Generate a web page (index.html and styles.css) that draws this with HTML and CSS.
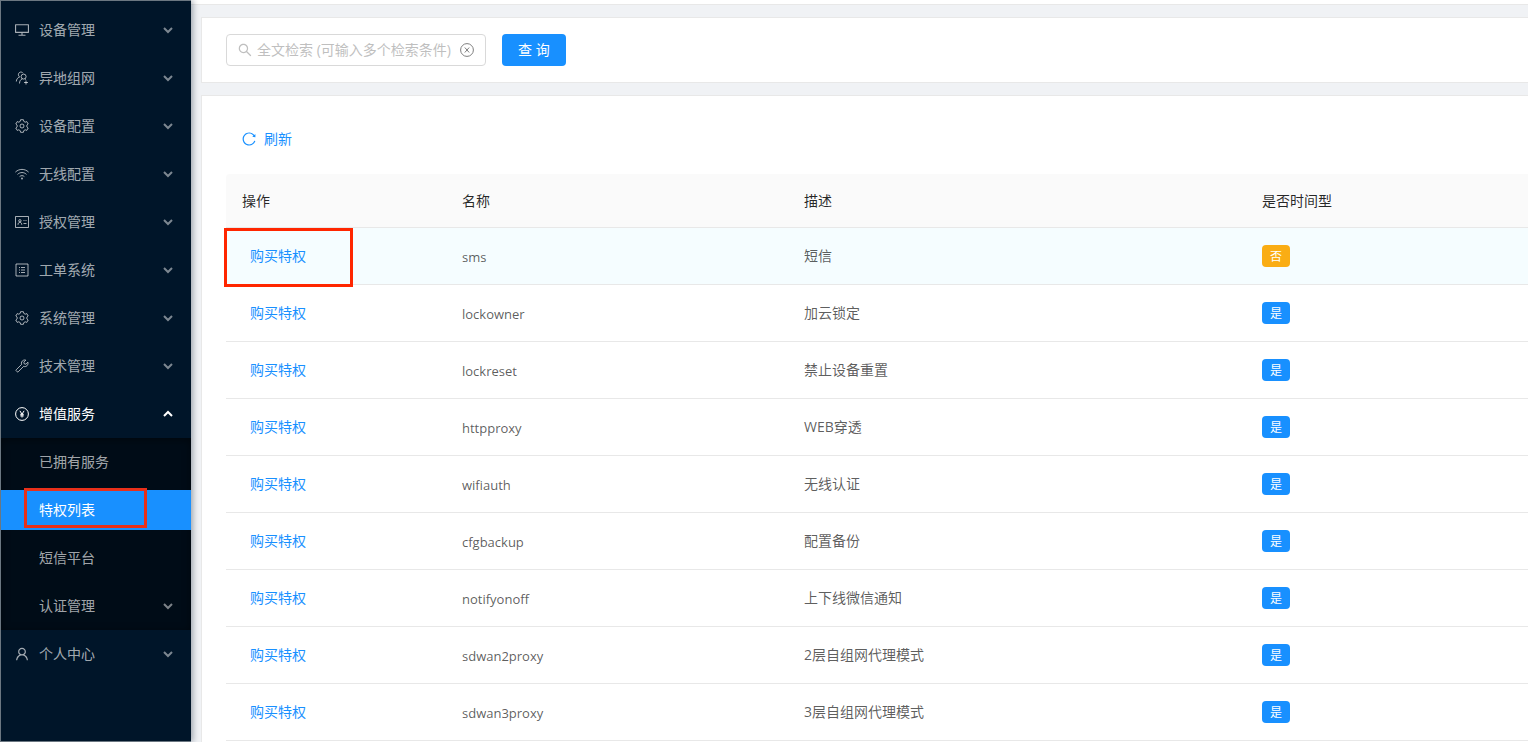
FILE: index.html
```html
<!DOCTYPE html>
<html lang="zh-CN">

<head>
  <meta charset="UTF-8">
  <meta name="viewport" content="width=device-width, initial-scale=1.0">
  <title>特权列表</title>
  <link rel="stylesheet" href="styles.css">
</head>

<body>
  <!-- icons -->
  <svg class="sprite" aria-hidden="true">
    <symbol id="i-desktop" viewBox="64 64 896 896">
      <path d="M928 140H96c-17.700 0-32 14.300-32 32v496c0 17.700 14.300 32 32 32h380v112H304c-8.800 0-16 7.200-16 16v48c0 4.400 3.600 8 8 8h432c4.400 0 8-3.600 8-8v-48c0-8.800-7.200-16-16-16H548V700h380c17.700 0 32-14.300 32-32V172c0-17.700-14.300-32-32-32zM888 628H136V212h752v416z" fill-rule="evenodd" />
    </symbol>
    <symbol id="i-team" viewBox="0 0 14 14">
      <g fill="none" stroke="currentColor">
        <circle cx="8.600" cy="5.600" r="2.500" />
        <path d="M4.500 12.500c0-2.500 1.200-4 2.900-4.700M9.800 7.800l1 .8M8 2.200C7.300 1.200 6.300.9 5.400 1.100 3.700 1.500 2.900 3.400 3.700 4.900c.2.500.5.800.9 1.100C2.500 6.700 1.500 8.200 1.300 10.500M11 9.500v4M9 11.500h4" />
      </g>
    </symbol>
    <symbol id="i-setting" viewBox="0 0 14 14">
      <g fill="none" stroke="currentColor" stroke-linejoin="round">
        <path d="M5.600.7h2.800l.4 1.700 1.400.8 1.600-.6 1.400 2.400-1.300 1.100v1.800l1.300 1.100-1.400 2.400-1.600-.6-1.400.8-.4 1.700H5.600l-.4-1.700-1.400-.8-1.600.6L.8 9l1.300-1.100V6.100L.8 5l1.400-2.400 1.600.6 1.400-.8z" />
        <circle cx="7" cy="7" r="2" />
      </g>
    </symbol>
    <symbol id="i-wifi" viewBox="0 0 14 14">
      <g fill="none" stroke="currentColor">
        <path d="M.4 5.100c3.800-3.600 9.400-3.600 13.200 0M2.500 7.400c2.600-2.500 6.400-2.500 9 0M4.600 9.600c1.400-1.300 3.400-1.300 4.800 0" />
      </g>
      <circle cx="7" cy="11.400" r="1" />
    </symbol>
    <symbol id="i-idcard" viewBox="0 0 14 14">
      <g fill="none" stroke="currentColor">
        <path d="M.5 1.500h13v11H.5z" />
        <circle cx="4.900" cy="5.800" r="1.200" />
        <path d="M3 9.800c.1-1.700.8-2.500 1.900-2.500s1.800.8 1.900 2.500M8.500 5.500h1M8.500 8.500h3M10.500 5.500h1" />
      </g>
    </symbol>
    <symbol id="i-order" viewBox="0 0 14 14">
      <g fill="none" stroke="currentColor">
        <path d="M1 1h12v12H1z" />
        <path d="M4 4.500h1M6 4.500h4M4 7h1M6 7h4M4 9.500h1M6 9.500h4" />
      </g>
    </symbol>
    <symbol id="i-tool" viewBox="0 0 14 14">
      <path d="M10.800 1.100C9.300.7 7.500 1.200 6.700 2.900c-.4.900-.4 1.700-.1 2.500L1.200 10.800c-.3.300-.3.700 0 1l1 1c.3.300.7.300 1 0l5.400-5.400c2.600.9 5-1.300 4.300-4.200l-2 2-1.700-.4-.4-1.700z" fill="none" stroke="currentColor" stroke-linejoin="round" />
    </symbol>
    <symbol id="i-yen" viewBox="0 0 14 14">
      <g fill="none" stroke="currentColor">
        <circle cx="7" cy="7" r="6.400" />
        <path d="M4.900 3.800L7 7.200l2.100-3.400M7 7v3.500M5.200 7.300h3.600M5.200 8.900h3.600" />
      </g>
    </symbol>
    <symbol id="i-user" viewBox="64 64 896 896">
      <path d="M858.500 763.600a374 374 0 00-80.600-119.500 375.630 375.630 0 00-119.500-80.600c-.4-.2-.8-.3-1.200-.5C719.500 518 760 444.700 760 362c0-137-111-248-248-248S264 225 264 362c0 82.700 40.500 156 102.800 201.100-.4.200-.8.300-1.200.5-44.800 18.900-85 46-119.500 80.600a375.630 375.630 0 00-80.600 119.500A371.700 371.700 0 00136 901.800a8 8 0 008 8.200h60c4.400 0 7.900-3.500 8-7.800 2-77.200 33-149.500 87.800-204.300 56.700-56.700 132-87.900 212.200-87.900s155.500 31.200 212.200 87.900C779 752.700 810 825 812 902.200c.1 4.400 3.600 7.800 8 7.800h60a8 8 0 008-8.200c-1-47.800-10.900-94.300-29.500-138.200zM512 534c-45.900 0-89.100-17.900-121.600-50.400S340 407.900 340 362c0-45.900 17.900-89.100 50.400-121.600S466.100 190 512 190s89.100 17.900 121.600 50.400S684 316.100 684 362c0 45.900-17.900 89.100-50.400 121.600S557.900 534 512 534z" />
    </symbol>
    <symbol id="i-down" viewBox="0 0 10 10">
      <path d="M1 3l4 4 4-4" fill="none" stroke="currentColor" stroke-width="2" />
    </symbol>
    <symbol id="i-search" viewBox="64 64 896 896">
      <path d="M909.600 854.500L649.900 594.800C690.200 542.700 712 479 712 412c0-80.200-31.300-155.400-87.900-212.100-56.600-56.700-132-87.900-212.100-87.900s-155.500 31.300-212.100 87.900C143.200 256.500 112 331.800 112 412c0 80.100 31.300 155.500 87.900 212.100C256.500 680.800 331.800 712 412 712c67 0 130.600-21.800 182.700-62l259.700 259.600a8.200 8.200 0 0011.600 0l43.600-43.500a8.200 8.200 0 000-11.600zM570.400 570.400C528 612.700 471.800 636 412 636s-116-23.300-158.400-65.600C211.300 528 188 471.800 188 412s23.300-116.100 65.600-158.400C296 211.300 352.200 188 412 188s116.100 23.200 158.400 65.600S636 352.200 636 412s-23.300 116.100-65.600 158.400z" />
    </symbol>
    <symbol id="i-close" viewBox="0 0 14 14">
      <g fill="none" stroke="currentColor">
        <circle cx="7" cy="7" r="6.400" />
        <path d="M4.800 4.500l4.400 5M9.200 4.500l-4.400 5" />
      </g>
    </symbol>
    <symbol id="i-reload" viewBox="64 64 896 896">
      <path d="M909.100 209.300l-56.400 44.100C775.800 155.100 656.200 92 521.900 92 290 92 102.300 279.500 102 511.500 101.700 743.700 289.800 932 521.900 932c181.300 0 335.800-115 394.600-276.100 1.500-4.200-.7-8.900-4.900-10.300l-56.700-19.500a8 8 0 00-10.100 4.800c-1.800 5-3.800 10-5.900 14.900-17.300 41-42.100 77.800-73.700 109.400A344.770 344.770 0 01655.900 829c-42.300 17.900-87.400 27-133.800 27-46.500 0-91.500-9.100-133.800-27A341.500 341.500 0 01279 755.200a342.160 342.160 0 01-73.700-109.400c-17.900-42.400-27-87.400-27-133.900s9.100-91.500 27-133.900c17.300-41 42.100-77.800 73.700-109.400 31.600-31.600 68.400-56.400 109.300-73.800 42.300-17.900 87.400-27 133.800-27 46.500 0 91.500 9.100 133.800 27a341.500 341.500 0 01109.300 73.800c9.900 9.900 19.200 20.400 27.800 31.400l-60.200 47a8 8 0 003 14.100l175.600 43c5 1.200 9.900-2.600 9.900-7.700l.8-180.900c-.1-6.600-7.800-10.300-13-6.200z" />
    </symbol>
  </svg>

  <div class="layout">
    <nav class="sider">
      <button class="menu-item" type="button"><svg class="icon"><use href="#i-desktop" /></svg><span>设备管理</span><svg class="arrow"><use href="#i-down" /></svg></button>
      <button class="menu-item" type="button"><svg class="icon"><use href="#i-team" /></svg><span>异地组网</span><svg class="arrow"><use href="#i-down" /></svg></button>
      <button class="menu-item" type="button"><svg class="icon"><use href="#i-setting" /></svg><span>设备配置</span><svg class="arrow"><use href="#i-down" /></svg></button>
      <button class="menu-item" type="button"><svg class="icon"><use href="#i-wifi" /></svg><span>无线配置</span><svg class="arrow"><use href="#i-down" /></svg></button>
      <button class="menu-item" type="button"><svg class="icon"><use href="#i-idcard" /></svg><span>授权管理</span><svg class="arrow"><use href="#i-down" /></svg></button>
      <button class="menu-item" type="button"><svg class="icon"><use href="#i-order" /></svg><span>工单系统</span><svg class="arrow"><use href="#i-down" /></svg></button>
      <button class="menu-item" type="button"><svg class="icon"><use href="#i-setting" /></svg><span>系统管理</span><svg class="arrow"><use href="#i-down" /></svg></button>
      <button class="menu-item" type="button"><svg class="icon"><use href="#i-tool" /></svg><span>技术管理</span><svg class="arrow"><use href="#i-down" /></svg></button>
      <button class="menu-item open" type="button"><svg class="icon"><use href="#i-yen" /></svg><span>增值服务</span><svg class="arrow"><use href="#i-down" /></svg></button>
      <div class="submenu">
        <a class="menu-item" href="#">已拥有服务</a>
        <a class="menu-item selected" href="#">特权列表</a>
        <a class="menu-item" href="#">短信平台</a>
        <button class="menu-item" type="button"><span>认证管理</span><svg class="arrow"><use href="#i-down" /></svg></button>
      </div>
      <button class="menu-item" type="button"><svg class="icon"><use href="#i-user" /></svg><span>个人中心</span><svg class="arrow"><use href="#i-down" /></svg></button>
    </nav>

    <div class="main">
      <header class="header"></header>
      <main class="content">
        <form class="card search">
          <div class="search-box">
            <svg class="icon"><use href="#i-search" /></svg>
            <input type="text" placeholder="全文检索 (可输入多个检索条件)" aria-label="全文检索">
            <button class="clear" type="button" aria-label="清空"><svg class="icon"><use href="#i-close" /></svg></button>
          </div>
          <button class="btn-primary" type="button">查 询</button>
        </form>

        <section class="card list">
          <button class="refresh" type="button"><svg class="icon"><use href="#i-reload" /></svg>刷新</button>
          <table class="table">
            <colgroup>
              <col class="col-action">
              <col class="col-name">
              <col class="col-desc">
              <col>
            </colgroup>
            <thead>
              <tr>
                <th>操作</th>
                <th>名称</th>
                <th>描述</th>
                <th>是否时间型</th>
              </tr>
            </thead>
            <tbody>
              <tr class="hover">
                <td class="marked"><a href="#">购买特权</a></td>
                <td class="name">sms</td>
                <td>短信</td>
                <td><span class="tag no">否</span></td>
              </tr>
              <tr>
                <td><a href="#">购买特权</a></td>
                <td class="name">lockowner</td>
                <td>加云锁定</td>
                <td><span class="tag">是</span></td>
              </tr>
              <tr>
                <td><a href="#">购买特权</a></td>
                <td class="name">lockreset</td>
                <td>禁止设备重置</td>
                <td><span class="tag">是</span></td>
              </tr>
              <tr>
                <td><a href="#">购买特权</a></td>
                <td class="name">httpproxy</td>
                <td>WEB穿透</td>
                <td><span class="tag">是</span></td>
              </tr>
              <tr>
                <td><a href="#">购买特权</a></td>
                <td class="name">wifiauth</td>
                <td>无线认证</td>
                <td><span class="tag">是</span></td>
              </tr>
              <tr>
                <td><a href="#">购买特权</a></td>
                <td class="name">cfgbackup</td>
                <td>配置备份</td>
                <td><span class="tag">是</span></td>
              </tr>
              <tr>
                <td><a href="#">购买特权</a></td>
                <td class="name">notifyonoff</td>
                <td>上下线微信通知</td>
                <td><span class="tag">是</span></td>
              </tr>
              <tr>
                <td><a href="#">购买特权</a></td>
                <td class="name">sdwan2proxy</td>
                <td>2层自组网代理模式</td>
                <td><span class="tag">是</span></td>
              </tr>
              <tr>
                <td><a href="#">购买特权</a></td>
                <td class="name">sdwan3proxy</td>
                <td>3层自组网代理模式</td>
                <td><span class="tag">是</span></td>
              </tr>
            </tbody>
          </table>
        </section>
      </main>
    </div>
  </div>
</body>

</html>
```
FILE: styles.css
```css
*,
*::after {
  box-sizing: border-box;
}

body {
  margin: 0;
  font-family: "Open Sans", "Noto Sans CJK SC", sans-serif;
  font-size: 14px;
  line-height: 22px;
  color: rgba(0, 0, 0, 0.65);
  background: #f0f2f5;
}

button,
input {
  font: inherit;
}

button {
  border: 0;
  background: none;
  cursor: pointer;
}

a {
  color: #1890ff;
  text-decoration: none;
}

.sprite {
  display: none;
}

.icon {
  width: 14px;
  height: 14px;
  flex: none;
  fill: currentColor;
}

.layout {
  display: flex;
  min-height: 100vh;
}

/* sider */
.sider {
  flex: none;
  width: 191px;
  padding-top: 5px;
  background: #001529;
  border: 1px solid #6b7781;
  border-right: 0;
  box-shadow: 2px 0 6px rgba(0, 21, 41, 0.35);
  z-index: 1;
}

.menu-item {
  position: relative;
  display: flex;
  align-items: center;
  gap: 10px;
  width: 100%;
  height: 40px;
  margin: 4px 0 8px;
  padding: 0 18px 0 14px;
  color: rgba(255, 255, 255, 0.65);
}

.arrow {
  width: 10px;
  height: 10px;
  margin-left: auto;
  opacity: 0.75;
}

.open {
  margin-bottom: 4px;
  color: #fff;
}

.open .arrow {
  transform: rotate(180deg);
  opacity: 1;
}

.submenu {
  padding: 4px 0;
  background: #000c17;
  box-shadow: inset 0 2px 8px rgba(0, 0, 0, 0.45);
}

.submenu .menu-item {
  margin: 0 0 8px;
  padding-left: 38px;
}

.submenu .menu-item:last-child {
  margin-bottom: 0;
}

.submenu .selected {
  color: #fff;
  background: #1890ff;
}

.selected::after {
  content: "";
  position: absolute;
  top: -2px;
  left: 23px;
  width: 123px;
  height: 40px;
  border: 3px solid #e8301a;
}

/* content */
.main {
  flex: 1;
  min-width: 0;
  display: flex;
  flex-direction: column;
}

.header {
  height: 5px;
  background: #fff;
  border-bottom: 1px solid #e8e8e8;
}

.content {
  flex: 1;
  display: flex;
  flex-direction: column;
  gap: 12px;
  padding: 12px 0 0 10px;
}

.card {
  background: #fff;
  border: 1px solid #e8e8e8;
  border-right: 0;
}

.search {
  display: flex;
  align-items: center;
  gap: 16px;
  padding: 16px 24px;
}

.search-box {
  display: flex;
  align-items: center;
  gap: 5px;
  width: 260px;
  height: 32px;
  padding: 0 11px;
  color: #bfbfbf;
  border: 1px solid #d9d9d9;
  border-radius: 4px;
}

.search-box input {
  flex: 1;
  min-width: 0;
  padding: 0;
  border: 0;
  outline: 0;
}

.search-box input::placeholder {
  color: #bfbfbf;
}

.clear {
  display: flex;
  padding: 0;
  color: #7f7f7f;
}

.btn-primary {
  height: 32px;
  padding: 0 16px;
  color: #fff;
  background: #1890ff;
  border-radius: 4px;
}

.list {
  flex: 1;
  padding: 24px 0 0 24px;
  border-bottom: 0;
}

.refresh {
  display: flex;
  align-items: center;
  gap: 8px;
  margin: 0 0 16px;
  padding: 8px 16px;
  color: #1890ff;
}

.table {
  width: 100%;
  table-layout: fixed;
  border-collapse: separate;
  border-spacing: 0;
  text-align: left;
}

.col-action {
  width: 220px;
}

.col-name {
  width: 342px;
}

.col-desc {
  width: 458px;
}

.table th,
.table td {
  padding: 0 16px;
  border-bottom: 1px solid #e8e8e8;
}

.table th {
  height: 54px;
  font-weight: normal;
  color: rgba(0, 0, 0, 0.85);
  background: #fafafa;
}

.table th:first-child {
  border-top-left-radius: 4px;
}

.table td {
  height: 57px;
}

.table td a {
  padding: 0 8px;
}

.table .name {
  padding-top: 2px;
  font-size: 13px;
}

.hover td {
  background: #f5fdff;
}

.marked {
  position: relative;
}

.marked::after {
  content: "";
  position: absolute;
  top: 0;
  left: -2px;
  width: 129px;
  height: 59px;
  border: 3px solid #ff2600;
}

.tag {
  display: block;
  width: 28px;
  height: 22px;
  padding-top: 1px;
  font-size: 12px;
  text-align: center;
  color: #fff;
  background: #1890ff;
  border-radius: 4px;
}

.tag.no {
  background: #faad14;
}
```
